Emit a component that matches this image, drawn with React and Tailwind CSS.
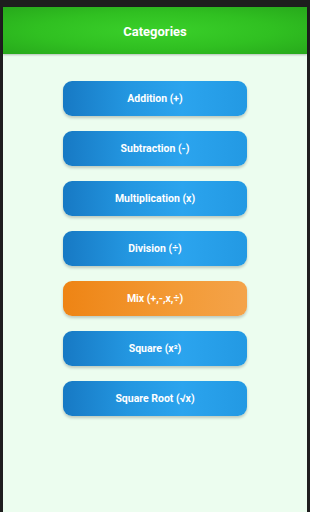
import React from "react";

const items = [
  { label: "Addition (+)", orange: false },
  { label: "Subtraction (-)", orange: false },
  { label: "Multiplication (x)", orange: false },
  { label: "Division (÷)", orange: false },
  { label: "Mix (+,-,x,÷)", orange: true },
  { label: "Square (x²)", orange: false },
  { label: "Square Root (√x)", orange: false },
];

export default function App() {
  return (
    <div
      className="w-[310px] h-[512px] bg-[#1e1e1e] pt-[7px] px-[3px] flex flex-col overflow-hidden"
      style={{ fontFamily: "Roboto, 'Noto Sans', sans-serif" }}
    >
      <div className="flex-1 flex flex-col bg-[#ecfdef]">
        <div className="h-[47px] pt-[3px] flex items-center justify-center bg-[radial-gradient(ellipse_at_center,#3ad02a_0%,#30c021_55%,#27a91b_100%)] shadow-[0_1px_2px_rgba(0,0,0,0.25)]">
          <span className="text-white text-[13px] font-bold">Categories</span>
        </div>
        <div className="flex flex-col items-center gap-[15px] pt-[27px]">
          {items.map((it) => (
            <div
              key={it.label}
              className={
                it.orange
                  ? "w-[184px] h-[35px] rounded-[9px] flex items-center justify-center bg-[linear-gradient(90deg,#ee8414_0%,#f39a35_60%,#f4a34a_100%)] shadow-[0_2px_3px_rgba(0,0,0,0.2)]"
                  : "w-[184px] h-[35px] rounded-[9px] flex items-center justify-center bg-[linear-gradient(90deg,#1779c4_0%,#2396e0_35%,#2ba4ee_65%,#2399e3_100%)] shadow-[0_2px_3px_rgba(0,0,0,0.2)]"
              }
            >
              <span className="text-white text-[10.5px] font-bold">{it.label}</span>
            </div>
          ))}
        </div>
      </div>
    </div>
  );
}
